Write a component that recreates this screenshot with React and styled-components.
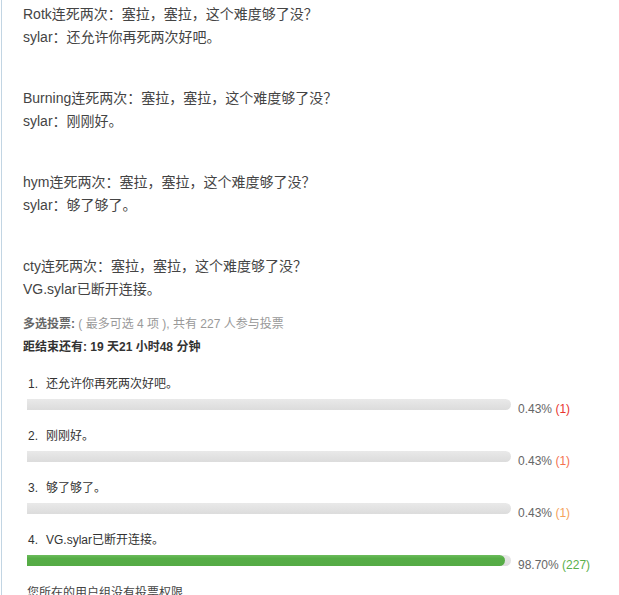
import styled, { createGlobalStyle } from 'styled-components'

const GlobalStyle = createGlobalStyle`
    html, body {
        margin: 0;
        padding: 0;
        background: #fff;
    }
    body {
        font-family: "Liberation Sans", "Noto Sans CJK SC", sans-serif;
        color: #444;
    }
`

const Page = styled.div`
    width: 619px;
    height: 595px;
    overflow: hidden;
    box-sizing: border-box;
    border-left: 1px solid #c2d5e3;
    margin-left: 1px;
    padding: 3px 0 0 21px;
`

const Posts = styled.div`
    display: flex;
    flex-direction: column;
    gap: 39px;
    margin-bottom: 13px;
`

const Post = styled.div`
    font-size: 14px;
    line-height: 22.5px;
    color: #444;
`

const Info = styled.div`
    font-size: 12px;
    line-height: 23px;
    color: #999;
`

const Strong = styled.strong`
    color: ${p => p.$c || '#666'};
    font-weight: 700;
`

const Options = styled.div`
    margin-top: 17px;
    padding-left: 4px;
    display: flex;
    flex-direction: column;
    gap: 11px;
`

const Option = styled.div`
    display: flex;
    flex-direction: column;
    gap: 4px;
`

const Label = styled.div`
    font-size: 12px;
    line-height: 16px;
    color: #333;
    padding-left: 1px;

    span {
        margin-right: 8px;
    }
`

const Row = styled.div`
    display: flex;
    align-items: flex-end;
    gap: 7px;
    height: 21px;
`

const Track = styled.div`
    width: 484px;
    height: 11px;
    margin-bottom: 7px;
    background: linear-gradient(#e9e9e9, #dcdcdc);
    border-radius: 0 6px 6px 0;
`

const Fill = styled.div`
    height: 100%;
    background: linear-gradient(#6cbd5c, #56ad46 30%, #55ab45);
    border-radius: 0 6px 6px 0;
`

const Percent = styled.div`
    font-size: 12px;
    line-height: 16px;
    color: #666;
    white-space: nowrap;

    em {
        font-style: normal;
        color: ${p => p.$c};
    }
`

const Notice = styled.div`
    margin-top: 12px;
    padding-left: 4px;
    font-size: 12px;
    line-height: 16px;
    color: #444;
`

const posts = [
    ['Rotk连死两次：塞拉，塞拉，这个难度够了没？', 'sylar：还允许你再死两次好吧。'],
    ['Burning连死两次：塞拉，塞拉，这个难度够了没？', 'sylar：刚刚好。'],
    ['hym连死两次：塞拉，塞拉，这个难度够了没？', 'sylar：够了够了。'],
    ['cty连死两次：塞拉，塞拉，这个难度够了没？', 'VG.sylar已断开连接。'],
]

const options = [
    { text: '还允许你再死两次好吧。', pct: 0.43, count: 1, color: '#e8352f' },
    { text: '刚刚好。', pct: 0.43, count: 1, color: '#f4714f' },
    { text: '够了够了。', pct: 0.43, count: 1, color: '#f5a35a' },
    { text: 'VG.sylar已断开连接。', pct: 98.7, count: 227, color: '#5aaf4a' },
]

export default function App() {
    return (
        <>
            <GlobalStyle />
            <Page lang="zh-CN">
                <Posts>
                    {posts.map((p, i) => (
                        <Post key={i}>
                            {p[0]}<br />{p[1]}
                        </Post>
                    ))}
                </Posts>
                <Info>
                    <Strong>多选投票:</Strong> ( 最多可选 4 项 ), 共有 227 人参与投票
                </Info>
                <Info>
                    <Strong $c="#333">距结束还有: 19 天21 小时48 分钟</Strong>
                </Info>
                <Options>
                    {options.map((o, i) => (
                        <Option key={i}>
                            <Label><span>{i + 1}.</span>{o.text}</Label>
                            <Row>
                                <Track>
                                    {o.pct > 1 && <Fill style={{ width: `${o.pct}%` }} />}
                                </Track>
                                <Percent $c={o.color}>
                                    {o.pct.toFixed(2)}% <em>({o.count})</em>
                                </Percent>
                            </Row>
                        </Option>
                    ))}
                </Options>
                <Notice>您所在的用户组没有投票权限</Notice>
            </Page>
        </>
    )
}
